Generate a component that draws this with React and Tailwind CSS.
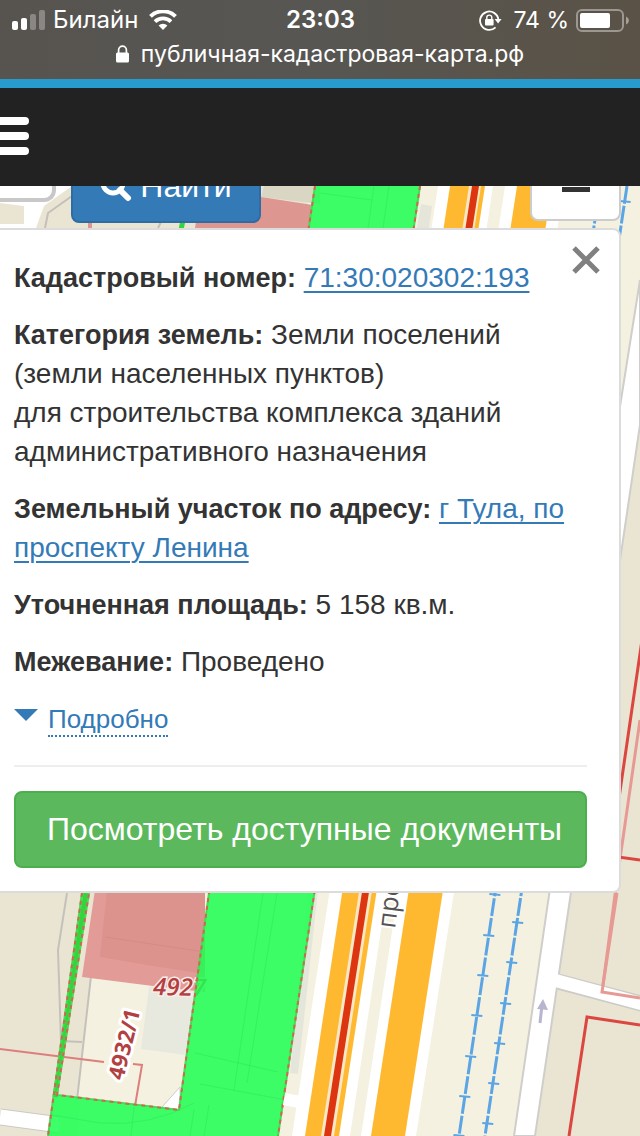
import { useState } from "react";

const RAIL_LEFT = [895, 936, 976, 1016, 1057, 1097, 1136];
const RAIL_RIGHT = [202, 923, 963, 1004, 1044, 1084, 1124];

// Both rails lean the same way, so x follows from y
const railX = (start, y) => start - (y - 186) * 0.149;

function SignalIcon() {
  return (
    <svg width="34" height="20" viewBox="0 0 34 20" fill="#fff">
      <rect x="0" y="11" width="6" height="9" rx="2" />
      <rect x="9" y="8" width="6" height="12" rx="2" />
      <rect x="18" y="4" width="6" height="16" rx="2" opacity="0.3" />
      <rect x="27" y="0" width="6" height="20" rx="2" opacity="0.3" />
    </svg>
  );
}

function WifiIcon() {
  return (
    <svg width="28" height="20" viewBox="0 0 28 20" fill="none" stroke="#fff">
      <path d="M1.5 6.4a18 18 0 0 1 25 0" strokeWidth="4" />
      <path d="M6 11.6a11.6 11.6 0 0 1 16 0" strokeWidth="3.8" />
      <path d="M9.6 15.4a6.4 6.4 0 0 1 8.8 0L14 20z" fill="#fff" stroke="none" />
    </svg>
  );
}

function RotationLockIcon() {
  return (
    <svg width="23" height="21" viewBox="0 0 23 21" fill="none" stroke="#fff">
      <path d="M16.6 17.4A9.2 9.2 0 1 1 19.4 9.5" strokeWidth="1.8" />
      <path d="M15.6 9h7l-3.5 4.6z" fill="#fff" stroke="none" />
      <rect x="6" y="9" width="8.6" height="6.4" rx="1" fill="#fff" stroke="none" />
      <path d="M7.8 9.4V7.6a2.5 2.5 0 0 1 5 0v1.8" strokeWidth="1.4" />
    </svg>
  );
}

function BatteryIcon() {
  return (
    <svg width="53" height="23" viewBox="0 0 53 23">
      <rect x="1" y="1" width="46" height="21" rx="5" fill="none" stroke="#fff" strokeOpacity="0.4" strokeWidth="2" />
      <rect x="4" y="4" width="30" height="15" rx="2" fill="#fff" />
      <path d="M50 7.5q3 1.5 3 4t-3 4z" fill="#fff" opacity="0.45" />
    </svg>
  );
}

function LockIcon() {
  return (
    <svg width="13" height="18" viewBox="0 0 13 18">
      <rect x="0" y="7.5" width="13" height="10" rx="1.5" fill="#fff" />
      <path d="M2.6 8.5V5a3.9 3.9 0 0 1 7.8 0v3.5" fill="none" stroke="#fff" strokeWidth="1.7" />
    </svg>
  );
}

function StatusBar() {
  return (
    <header className="bg-[#575450] bg-linear-to-r from-[#575450] via-[#575652] to-[#5a5246] pb-[11px] font-[Inter,sans-serif] text-white">
      <div className="grid h-10 grid-cols-[1fr_auto_1fr] items-center pl-3 pr-[11px]">
        <div className="flex items-center gap-[7px] text-2xl">
          <SignalIcon />
          <span>Билайн</span>
          <span className="pl-1">
            <WifiIcon />
          </span>
        </div>
        <time className="text-2xl font-semibold">23:03</time>
        <div className="flex items-center justify-end gap-[7px] text-[23px]">
          <span className="pr-1">
            <RotationLockIcon />
          </span>
          <span>74 %</span>
          <BatteryIcon />
        </div>
      </div>
      <div className="flex h-7 items-center justify-center gap-3 text-[23px]">
        <LockIcon />
        <span>публичная-кадастровая-карта.рф</span>
      </div>
    </header>
  );
}

function CadastralMap() {
  return (
    <svg
      className="absolute inset-0 h-full w-full"
      viewBox="0 186 640 950"
      preserveAspectRatio="xMinYMin slice"
      aria-hidden="true"
    >
      <rect y="186" width="640" height="950" fill="#f4f1e1" />

      {/* Blocks */}
      <path d="M0 186H310L245 640L92 975L77 1136H0Z" fill="#eae5d3" />
      <path d="M92 975L77 1100L120 1136H190L220 893H100Z" fill="#f4f1e1" />
      <path d="M640 425L535 1136H640Z" fill="#eae5d3" />
      <path d="M264 186H320V204L261 197Z" fill="#dad6c4" />

      {/* Side streets on the left */}
      <path d="M0 186H72L44 206L36 228H0V224H24V206L0 203Z" fill="#fff" />
      <path d="M72 196L48 213L45 228M158 228L162 220" fill="none" stroke="#c3bfb9" strokeWidth="2" />
      <path d="M0 1117L60 1125" stroke="#ccc9c2" strokeWidth="17" />
      <path d="M0 1117L60 1125" stroke="#fff" strokeWidth="15" />
      <path d="M67 893L58 950L61 1041L82 1042M91 976L77 1100" fill="none" stroke="#c4c1ba" strokeWidth="2" />

      {/* Buildings */}
      <path d="M149 987L200 975L185 1055L141 1049Z" fill="#e8e9de" />
      <path d="M318 890L298 1074L290 1073L308 890Z" fill="#e5e6db" />
      <path d="M421 204L432 206L429 228H417Z" fill="#e6e5d9" />
      <path d="M261 197L313 205L308 228H195L200 197Z" fill="#dd9690" />
      <path d="M95 890L82 977L153 986L205 992V890Z" fill="#e39b97" />
      <path d="M107 890L100 957L153 966L205 974V890Z" fill="#dc938e" />
      <path d="M105 937L205 952" stroke="#d68a86" strokeWidth="1" />
      <path d="M90 228V218" stroke="#dd9690" strokeWidth="4" />

      {/* Parcel borders */}
      <path d="M0 1049L104 1062M133 1064L142 1065L135 1106" fill="none" stroke="#dc7f7b" strokeWidth="2" />
      <path d="M640 720L617 880L602 992L640 998" fill="none" stroke="#e79a94" strokeWidth="3" />

      <text
        transform="translate(153 995) rotate(1)"
        className="font-['Open_Sans',sans-serif] text-2xl font-semibold italic"
        fill="#b23f41"
        stroke="#f9ece9"
        strokeWidth="3"
        paintOrder="stroke"
      >
        4927
      </text>
      <text
        transform="translate(123 1081) rotate(-76)"
        className="font-['Open_Sans',sans-serif] text-[22px] font-bold"
        fill="#b23f41"
        stroke="#fff"
        strokeWidth="6"
        strokeLinejoin="round"
        paintOrder="stroke"
      >
        4932/1
      </text>

      <path d="M162 1107L180 1087V1110Z" fill="#fff" stroke="#ccc" />

      {/* Selected parcel */}
      <path d="M420 186L278 1136H48L82 893L181 228H185L88 893L57 1095L179 1110L209 893L315 186Z" fill="#1dff50" fillOpacity="0.86" />
      <g fill="none" stroke="#2ee55c" strokeOpacity="0.5">
        <path d="M263 893L234 1090M277 893L247 1083M195 1053L278 1072M200 1084L286 1100M194 1110L190 1136M209 1105L204 1136" />
        <path d="M374 186L368 228M389 186L383 228M320 193L372 200" />
        <path d="M52 1115L100 1123Q150 1127 194 1103M134 1107L131 1136" />
      </g>
      <path d="M86 893L55 1097" stroke="#32d63c" strokeWidth="5" />
      <path d="M183 220L181 230" stroke="#32d63c" strokeWidth="5" />
      <g fill="none" strokeWidth="2">
        <path d="M420 186L278 1136M315 186L209 893L179 1110L57 1095L89 893M82 893L48 1136" stroke="#3fe04a" />
        <path d="M420 186L278 1136M315 186L209 893L179 1110L57 1095L89 893M82 893L48 1136" stroke="#d0655b" strokeDasharray="4 4" />
      </g>

      {/* Avenue */}
      <path d="M284 1099L310 1104" stroke="#fff" strokeWidth="12" />
      <path d="M438 186H564L416 1136H292Z" fill="#fff" />
      <path d="M493 186H505L361 1136H350Z" fill="#f4f1e1" />
      <path d="M450 186H484L338 1136H305Z" fill="#ffb930" />
      <path d="M469 186H482L336 1136H321Z" fill="#f9e8c6" />
      <path d="M472 186H479L331 1136H324Z" fill="#dc3510" />
      <path d="M481 186H485L339 1136H334Z" fill="#ffb930" />
      <path d="M517 186H552L405 1136H371Z" fill="#ffb930" />
      <text
        transform="translate(395 929) rotate(-83)"
        className="font-['Open_Sans',sans-serif] text-[26px]"
        fill="#555"
        stroke="#fff"
        strokeWidth="4"
        paintOrder="stroke"
      >
        проспект
      </text>

      {/* Tram line */}
      <g stroke="#5ba5e4">
        <path d="M600 186L459 1136" strokeWidth="3" strokeDasharray="18 2" />
        <path d="M627 186L485 1136" strokeWidth="3" strokeDasharray="18 2" />
        {RAIL_LEFT.map((y) => (
          <path key={y} d={`M${railX(600, y) - 5} ${y - 1}l11 1`} strokeWidth="2" />
        ))}
        {RAIL_RIGHT.map((y) => (
          <path key={y} d={`M${railX(627, y) - 5} ${y - 1}l11 1`} strokeWidth="2" />
        ))}
      </g>

      {/* Service road */}
      <path d="M556 981L650 1006" stroke="#cdcbc7" strokeWidth="16" />
      <path d="M640 280L621 400L514 1136H535L640 425Z" fill="#fff" stroke="#d0cecb" strokeWidth="2" />
      <path d="M550 979L650 1006" stroke="#fff" strokeWidth="13" />
      <path d="M540 1023L542 1005" stroke="#b7b5cf" strokeWidth="3" />
      <path d="M537 1009L543 999L548 1010Z" fill="#b7b5cf" />
      <g fill="none" stroke="#dc4641" strokeWidth="3">
        <path d="M642 640L618 805V857L640 860" />
        <path d="M569 1136L587 1017L640 1025" />
      </g>
      <path d="M617 893L602 992L640 998" fill="none" stroke="#e79a94" strokeWidth="3" />
    </svg>
  );
}

function Label({ children }) {
  return <b className="text-[27px] leading-none">{children}</b>;
}

function ParcelCard({ onClose }) {
  return (
    <section className="relative mr-[19px] rounded-r-lg border-2 border-l-0 border-[#dcdcdc] bg-white pt-7 pr-8 pb-[23px] pl-[14px] text-[28px] leading-[39px] text-[#333]">
      <button type="button" onClick={onClose} aria-label="Закрыть" className="absolute top-[15px] right-[18px]">
        <svg width="30" height="30" viewBox="0 0 30 30" stroke="#808080" strokeWidth="5">
          <path d="M3 3L27 27M27 3L3 27" />
        </svg>
      </button>

      <div className="flex flex-col gap-[18px]">
        <p>
          <Label>Кадастровый номер:</Label>{" "}
          <a href="#number" className="text-[#337ab7] underline decoration-2 underline-offset-4">
            71:30:020302:193
          </a>
        </p>
        <p>
          <Label>Категория земель:</Label> Земли поселений
          <br />
          (земли населенных пунктов)
          <br />
          для строительства комплекса зданий административного назначения
        </p>
        <p>
          <Label>Земельный участок по адресу:</Label>{" "}
          <a href="#address" className="text-[#337ab7] underline decoration-2 underline-offset-4">
            г Тула, по проспекту Ленина
          </a>
        </p>
        <p>
          <Label>Уточненная площадь:</Label> 5 158 кв.м.
        </p>
        <p>
          <Label>Межевание:</Label> Проведено
        </p>
        <button type="button" className="flex items-start gap-[10px] self-start text-[26px] text-[#337ab7]">
          <svg width="24" height="24" viewBox="0 0 24 24" fill="#337ab7">
            <path d="M0 10H24L12 22Z" />
          </svg>
          <span className="border-b-2 border-dotted border-[#337ab7] pt-1 leading-8">Подробно</span>
        </button>
      </div>

      <hr className="mt-7 mb-6 border-t-2 border-[#eee]" />
      <button
        type="button"
        className="h-[77px] w-full rounded-lg border-2 border-[#4cae4c] bg-[#5cb85c] pl-2 text-[32px] whitespace-nowrap text-white"
      >
        Посмотреть доступные документы
      </button>
    </section>
  );
}

function App() {
  const [open, setOpen] = useState(true);

  return (
    <div className="flex min-h-screen flex-col overflow-hidden font-['Liberation_Sans',sans-serif]">
      <StatusBar />

      <nav className="border-t-[9px] border-[#279ccc] bg-[#222] pt-[29px] pb-[31px]">
        <button type="button" aria-label="Меню" className="flex w-[29px] flex-col gap-[7px]">
          <span className="h-2 w-full rounded-r-sm bg-white" />
          <span className="h-2 w-full rounded-r-sm bg-white" />
          <span className="h-2 w-full rounded-r-sm bg-white" />
        </button>
      </nav>

      <main className="relative flex-1 overflow-hidden">
        <CadastralMap />

        {/* The controls are scrolled half under the navbar */}
        <div className="relative flex h-[42px] items-end">
          <input
            type="text"
            aria-label="Поиск"
            className="mb-[26px] h-16 w-14 rounded-br-xl border-r-4 border-b-4 border-[#c8c8c8] bg-white"
          />
          <button
            type="button"
            className="mb-[5px] ml-[15px] flex h-[74px] w-[190px] items-center justify-center gap-2 rounded-lg border-2 border-[#2e6da4] bg-[#337ab7] text-[32px] text-white"
          >
            <svg width="32" height="32" viewBox="0 0 32 32" fill="none" stroke="#fff">
              <circle cx="13" cy="13" r="10" strokeWidth="5" />
              <path d="M20 20L28 28" strokeWidth="6" strokeLinecap="round" />
            </svg>
            Найти
          </button>
          <button
            type="button"
            aria-label="Отдалить"
            className="mr-[19px] mb-[7px] ml-auto flex h-16 w-[91px] items-center justify-center rounded-b-lg border-2 border-[#ccc] bg-white"
          >
            <span className="h-[5px] w-7 bg-[#333]" />
          </button>
        </div>

        {open && <ParcelCard onClose={() => setOpen(false)} />}
      </main>
    </div>
  );
}

export default App;
